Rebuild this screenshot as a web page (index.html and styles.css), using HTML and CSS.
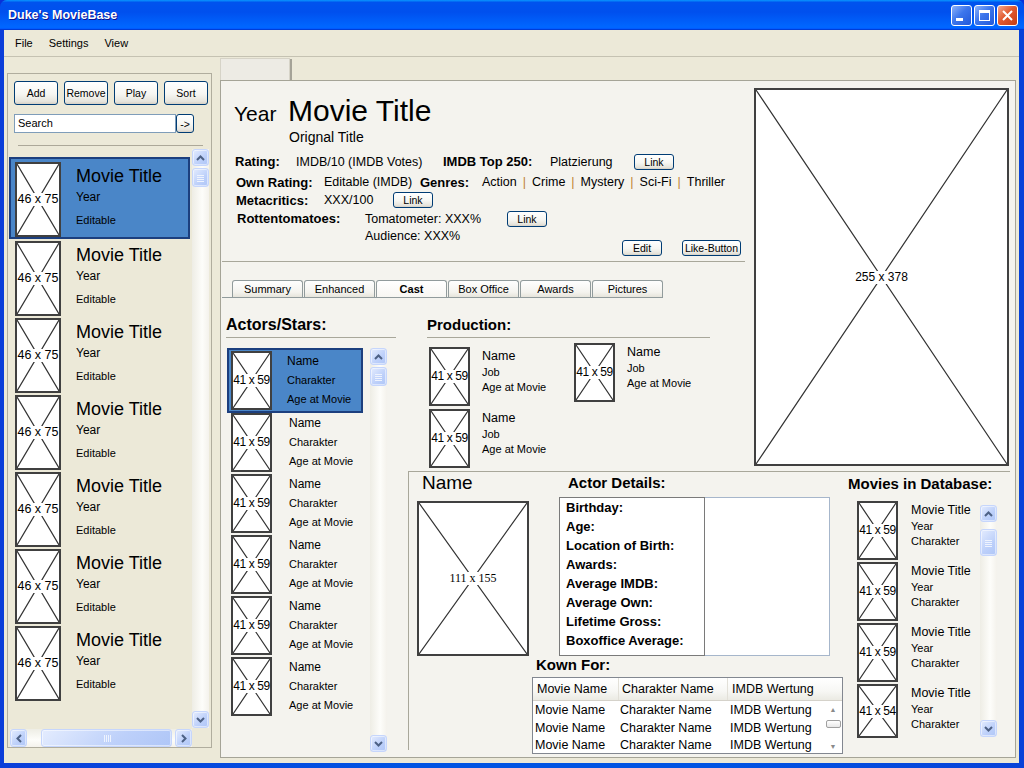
FILE: index.html
```html
<!DOCTYPE html>
<html>
<head>
<meta charset="utf-8">
<title>Duke's MovieBase</title>
<link rel="stylesheet" href="styles.css">
</head>
<body>
<div class="window">
  <div class="titlebar">
    <span class="title">Duke's MovieBase</span>
    <div class="tb-btns">
      <span class="tb-btn tb-blue"><span class="min-bar"></span></span>
      <span class="tb-btn tb-blue"><span class="max-box"></span></span>
      <span class="tb-btn tb-close"><svg width="19" height="19" viewBox="0 0 19 19"><path d="M5 5L14 14M14 5L5 14"/></svg></span>
    </div>
  </div>
  <div class="client">
    <div class="menubar"><span>File</span><span>Settings</span><span>View</span></div>
    <div class="body">
      <aside class="left-panel">
        <div class="lp-toolbar">
          <span class="xbtn lp-btn">Add</span>
          <span class="xbtn lp-btn">Remove</span>
          <span class="xbtn lp-btn">Play</span>
          <span class="xbtn lp-btn">Sort</span>
        </div>
        <div class="lp-search">
          <span class="search-input">Search</span>
          <span class="xbtn go-btn">-&gt;</span>
        </div>
        <div class="lp-sep"></div>
        <div class="lp-list">
          <div class="lp-items">
            <div class="movie-item selected">
              <div class="ph ph-46"><svg viewBox="0 0 100 100" preserveAspectRatio="none"><path d="M0 0L100 100M100 0L0 100"/></svg><span>46 x 75</span></div>
              <div class="mi-text"><div class="mi-title">Movie Title</div><div class="mi-year">Year</div><div class="mi-edit">Editable</div></div>
            </div>
            <div class="movie-item">
              <div class="ph ph-46"><svg viewBox="0 0 100 100" preserveAspectRatio="none"><path d="M0 0L100 100M100 0L0 100"/></svg><span>46 x 75</span></div>
              <div class="mi-text"><div class="mi-title">Movie Title</div><div class="mi-year">Year</div><div class="mi-edit">Editable</div></div>
            </div>
            <div class="movie-item">
              <div class="ph ph-46"><svg viewBox="0 0 100 100" preserveAspectRatio="none"><path d="M0 0L100 100M100 0L0 100"/></svg><span>46 x 75</span></div>
              <div class="mi-text"><div class="mi-title">Movie Title</div><div class="mi-year">Year</div><div class="mi-edit">Editable</div></div>
            </div>
            <div class="movie-item">
              <div class="ph ph-46"><svg viewBox="0 0 100 100" preserveAspectRatio="none"><path d="M0 0L100 100M100 0L0 100"/></svg><span>46 x 75</span></div>
              <div class="mi-text"><div class="mi-title">Movie Title</div><div class="mi-year">Year</div><div class="mi-edit">Editable</div></div>
            </div>
            <div class="movie-item">
              <div class="ph ph-46"><svg viewBox="0 0 100 100" preserveAspectRatio="none"><path d="M0 0L100 100M100 0L0 100"/></svg><span>46 x 75</span></div>
              <div class="mi-text"><div class="mi-title">Movie Title</div><div class="mi-year">Year</div><div class="mi-edit">Editable</div></div>
            </div>
            <div class="movie-item">
              <div class="ph ph-46"><svg viewBox="0 0 100 100" preserveAspectRatio="none"><path d="M0 0L100 100M100 0L0 100"/></svg><span>46 x 75</span></div>
              <div class="mi-text"><div class="mi-title">Movie Title</div><div class="mi-year">Year</div><div class="mi-edit">Editable</div></div>
            </div>
            <div class="movie-item">
              <div class="ph ph-46"><svg viewBox="0 0 100 100" preserveAspectRatio="none"><path d="M0 0L100 100M100 0L0 100"/></svg><span>46 x 75</span></div>
              <div class="mi-text"><div class="mi-title">Movie Title</div><div class="mi-year">Year</div><div class="mi-edit">Editable</div></div>
            </div>
          </div>
          <div class="vscroll lp-vscroll">
            <span class="sb-btn"><svg width="9" height="6" viewBox="0 0 9 6"><path d="M1 5L4.5 1.5L8 5"/></svg></span>
            <span class="sb-btn sb-thumb"><svg width="7" height="8" viewBox="0 0 7 8"><path d="M0 1.5H7M0 3.5H7M0 5.5H7M0 7.5H7"/></svg></span>
            <span class="sb-space"></span>
            <span class="sb-btn"><svg width="9" height="6" viewBox="0 0 9 6"><path d="M1 1L4.5 4.5L8 1"/></svg></span>
          </div>
        </div>
        <div class="hscroll">
          <span class="sb-btn"><svg width="6" height="9" viewBox="0 0 6 9"><path d="M5 1L1.5 4.5L5 8"/></svg></span>
          <span class="sb-btn h-thumb"><svg width="8" height="7" viewBox="0 0 8 7"><path d="M1.5 0V7M3.5 0V7M5.5 0V7M7.5 0V7"/></svg></span>
          <span class="sb-btn h-right"><svg width="6" height="9" viewBox="0 0 6 9"><path d="M1 1L4.5 4.5L1 8"/></svg></span>
        </div>
      </aside>

      <section class="main-wrap">
        <div class="main-tab"></div>
        <div class="main">
          <div class="header">
            <div class="hd-title"><span class="hd-year">Year</span><span class="hd-movie">Movie Title</span></div>
            <div class="hd-orig">Orignal Title</div>
            <div class="hd-row r1">
              <span class="lbl w-rating">Rating:</span>
              <span class="w-imdb">IMDB/10 (IMDB Votes)</span>
              <span class="lbl w-top">IMDB Top 250:</span>
              <span class="w-platz">Platzierung</span>
              <span class="xbtn link-btn">Link</span>
            </div>
            <div class="hd-row r2">
              <span class="lbl w-own">Own Rating:</span>
              <span class="w-edit">Editable (IMDB)</span>
              <span class="lbl w-genres">Genres:</span>
              <span class="genres">Action<i>|</i>Crime<i>|</i>Mystery<i>|</i>Sci-Fi<i>|</i>Thriller</span>
            </div>
            <div class="hd-row r3">
              <span class="lbl w-own">Metacritics:</span>
              <span class="w-meta">XXX/100</span>
              <span class="xbtn link-btn">Link</span>
            </div>
            <div class="hd-row r4">
              <span class="lbl rt-label">Rottentomatoes:</span>
              <div class="rt-vals">
                <div class="rt-tomato">Tomatometer: XXX%</div>
                <div class="rt-aud">Audience: XXX%</div>
              </div>
              <span class="xbtn link-btn rt-link">Link</span>
              <div class="hd-actions">
                <span class="xbtn edit-btn">Edit</span>
                <span class="xbtn like-btn">Like-Button</span>
              </div>
            </div>
            <div class="hd-sep"></div>
          </div>

          <div class="tabs-area">
            <div class="tabbar">
              <span class="tab">Summary</span>
              <span class="tab">Enhanced</span>
              <span class="tab active">Cast</span>
              <span class="tab">Box Office</span>
              <span class="tab">Awards</span>
              <span class="tab">Pictures</span>
            </div>
          </div>

          <div class="poster-cell">
            <div class="ph ph-poster"><svg viewBox="0 0 100 100" preserveAspectRatio="none"><path d="M0 0L100 100M100 0L0 100"/></svg><span>255 x 378</span></div>
          </div>

          <div class="actors">
            <div class="sec-head actors-head">Actors/Stars:</div>
            <div class="actor-list">
              <div class="actor-items">
                <div class="actor-item selected">
                  <div class="ph ph-41"><svg viewBox="0 0 100 100" preserveAspectRatio="none"><path d="M0 0L100 100M100 0L0 100"/></svg><span>41 x 59</span></div>
                  <div class="ai-text"><div class="t-name">Name</div><div class="t-sub">Charakter</div><div class="t-sub">Age at Movie</div></div>
                </div>
                <div class="actor-item">
                  <div class="ph ph-41"><svg viewBox="0 0 100 100" preserveAspectRatio="none"><path d="M0 0L100 100M100 0L0 100"/></svg><span>41 x 59</span></div>
                  <div class="ai-text"><div class="t-name">Name</div><div class="t-sub">Charakter</div><div class="t-sub">Age at Movie</div></div>
                </div>
                <div class="actor-item">
                  <div class="ph ph-41"><svg viewBox="0 0 100 100" preserveAspectRatio="none"><path d="M0 0L100 100M100 0L0 100"/></svg><span>41 x 59</span></div>
                  <div class="ai-text"><div class="t-name">Name</div><div class="t-sub">Charakter</div><div class="t-sub">Age at Movie</div></div>
                </div>
                <div class="actor-item">
                  <div class="ph ph-41"><svg viewBox="0 0 100 100" preserveAspectRatio="none"><path d="M0 0L100 100M100 0L0 100"/></svg><span>41 x 59</span></div>
                  <div class="ai-text"><div class="t-name">Name</div><div class="t-sub">Charakter</div><div class="t-sub">Age at Movie</div></div>
                </div>
                <div class="actor-item">
                  <div class="ph ph-41"><svg viewBox="0 0 100 100" preserveAspectRatio="none"><path d="M0 0L100 100M100 0L0 100"/></svg><span>41 x 59</span></div>
                  <div class="ai-text"><div class="t-name">Name</div><div class="t-sub">Charakter</div><div class="t-sub">Age at Movie</div></div>
                </div>
                <div class="actor-item">
                  <div class="ph ph-41"><svg viewBox="0 0 100 100" preserveAspectRatio="none"><path d="M0 0L100 100M100 0L0 100"/></svg><span>41 x 59</span></div>
                  <div class="ai-text"><div class="t-name">Name</div><div class="t-sub">Charakter</div><div class="t-sub">Age at Movie</div></div>
                </div>
              </div>
              <div class="vscroll actor-vscroll">
                <span class="sb-btn"><svg width="9" height="6" viewBox="0 0 9 6"><path d="M1 5L4.5 1.5L8 5"/></svg></span>
                <span class="sb-btn sb-thumb"><svg width="7" height="8" viewBox="0 0 7 8"><path d="M0 1.5H7M0 3.5H7M0 5.5H7M0 7.5H7"/></svg></span>
                <span class="sb-space"></span>
                <span class="sb-btn"><svg width="9" height="6" viewBox="0 0 9 6"><path d="M1 1L4.5 4.5L8 1"/></svg></span>
              </div>
            </div>
          </div>

          <div class="production">
            <div class="sec-head prod-head">Production:</div>
            <div class="prod-grid">
              <div class="prod-col1">
                <div class="prod-item">
                  <div class="ph ph-41"><svg viewBox="0 0 100 100" preserveAspectRatio="none"><path d="M0 0L100 100M100 0L0 100"/></svg><span>41 x 59</span></div>
                  <div class="pi-text"><div class="p-name">Name</div><div class="p-sub">Job</div><div class="p-sub">Age at Movie</div></div>
                </div>
                <div class="prod-item">
                  <div class="ph ph-41"><svg viewBox="0 0 100 100" preserveAspectRatio="none"><path d="M0 0L100 100M100 0L0 100"/></svg><span>41 x 59</span></div>
                  <div class="pi-text"><div class="p-name">Name</div><div class="p-sub">Job</div><div class="p-sub">Age at Movie</div></div>
                </div>
              </div>
              <div class="prod-col2">
                <div class="prod-item">
                  <div class="ph ph-41"><svg viewBox="0 0 100 100" preserveAspectRatio="none"><path d="M0 0L100 100M100 0L0 100"/></svg><span>41 x 59</span></div>
                  <div class="pi-text"><div class="p-name">Name</div><div class="p-sub">Job</div><div class="p-sub">Age at Movie</div></div>
                </div>
              </div>
            </div>
          </div>

          <div class="details">
            <div class="d-col1">
              <div class="d-name">Name</div>
              <div class="ph ph-111"><svg viewBox="0 0 100 100" preserveAspectRatio="none"><path d="M0 0L100 100M100 0L0 100"/></svg><span>111 x 155</span></div>
            </div>
            <div class="d-col2">
              <div class="plain-head ad-head">Actor Details:</div>
              <div class="ad-box">
                <div class="ad-labels">
                  <div>Birthday:</div>
                  <div>Age:</div>
                  <div>Location of Birth:</div>
                  <div>Awards:</div>
                  <div>Average IMDB:</div>
                  <div>Average Own:</div>
                  <div>Lifetime Gross:</div>
                  <div>Boxoffice Average:</div>
                </div>
                <div class="ad-values"></div>
              </div>
              <div class="plain-head kf-head">Kown For:</div>
              <div class="kf-table">
                <div class="kf-header">
                  <span class="kc1">Movie Name</span><span class="kc2">Charakter Name</span><span class="kc3">IMDB Wertung</span>
                </div>
                <div class="kf-body">
                  <div class="kf-rows">
                    <div class="kf-row"><span class="kr1">Movie Name</span><span class="kr2">Charakter Name</span><span>IMDB Wertung</span></div>
                    <div class="kf-row"><span class="kr1">Movie Name</span><span class="kr2">Charakter Name</span><span>IMDB Wertung</span></div>
                    <div class="kf-row"><span class="kr1">Movie Name</span><span class="kr2">Charakter Name</span><span>IMDB Wertung</span></div>
                  </div>
                  <div class="kf-scroll">
                    <span class="kf-arrow">▲</span>
                    <span class="kf-thumb"></span>
                    <span class="kf-space"></span>
                    <span class="kf-arrow">▼</span>
                  </div>
                </div>
              </div>
            </div>
            <div class="d-col3">
              <div class="plain-head">Movies in Database:</div>
              <div class="mdb-list">
                <div class="mdb-items">
                  <div class="mdb-item">
                    <div class="ph ph-41"><svg viewBox="0 0 100 100" preserveAspectRatio="none"><path d="M0 0L100 100M100 0L0 100"/></svg><span>41 x 59</span></div>
                    <div class="mdb-text"><div class="p-name">Movie Title</div><div class="p-sub">Year</div><div class="p-sub">Charakter</div></div>
                  </div>
                  <div class="mdb-item">
                    <div class="ph ph-41"><svg viewBox="0 0 100 100" preserveAspectRatio="none"><path d="M0 0L100 100M100 0L0 100"/></svg><span>41 x 59</span></div>
                    <div class="mdb-text"><div class="p-name">Movie Title</div><div class="p-sub">Year</div><div class="p-sub">Charakter</div></div>
                  </div>
                  <div class="mdb-item">
                    <div class="ph ph-41"><svg viewBox="0 0 100 100" preserveAspectRatio="none"><path d="M0 0L100 100M100 0L0 100"/></svg><span>41 x 59</span></div>
                    <div class="mdb-text"><div class="p-name">Movie Title</div><div class="p-sub">Year</div><div class="p-sub">Charakter</div></div>
                  </div>
                  <div class="mdb-item">
                    <div class="ph ph-41s"><svg viewBox="0 0 100 100" preserveAspectRatio="none"><path d="M0 0L100 100M100 0L0 100"/></svg><span>41 x 54</span></div>
                    <div class="mdb-text"><div class="p-name">Movie Title</div><div class="p-sub">Year</div><div class="p-sub">Charakter</div></div>
                  </div>
                </div>
                <div class="vscroll mdb-vscroll">
                  <span class="sb-btn"><svg width="9" height="6" viewBox="0 0 9 6"><path d="M1 5L4.5 1.5L8 5"/></svg></span>
                  <span class="sb-btn sb-thumb mdb-thumb"><svg width="7" height="8" viewBox="0 0 7 8"><path d="M0 1.5H7M0 3.5H7M0 5.5H7M0 7.5H7"/></svg></span>
                  <span class="sb-space"></span>
                  <span class="sb-btn"><svg width="9" height="6" viewBox="0 0 9 6"><path d="M1 1L4.5 4.5L8 1"/></svg></span>
                </div>
              </div>
            </div>
          </div>
        </div>
      </section>
    </div>
  </div>
</div>
</body>
</html>
```

FILE: styles.css
```css
* { box-sizing: border-box; }
html, body { margin: 0; padding: 0; }
body {
  width: 1024px;
  height: 768px;
  overflow: hidden;
  background: #0831D9;
  font-family: "Liberation Sans", Arial, sans-serif;
  color: #000;
}
.window {
  width: 1024px;
  height: 768px;
  display: flex;
  flex-direction: column;
  background: linear-gradient(90deg, #0B3ED9, #0054E3 40%, #0054E3 70%, #0842D8);
  border-radius: 7px 7px 0 0;
}
.titlebar {
  height: 30px;
  display: flex;
  align-items: center;
  padding: 0 6px 0 8px;
  border-radius: 7px 7px 0 0;
  background: linear-gradient(180deg, #0997ff, #0053ee 8%, #0050ee 40%, #06f 88%, #06f 93%, #005bff 95%, #003dd7 96%, #003dd7);
}
.title {
  flex: 1;
  color: #fff;
  font-weight: bold;
  font-size: 12.5px;
  text-shadow: 1px 1px #0F1089;
}
.tb-btns { display: flex; gap: 2px; }
.tb-btn {
  width: 21px;
  height: 21px;
  border: 1px solid #fff;
  border-radius: 3px;
  display: grid;
  place-items: center;
}
.tb-blue { background: linear-gradient(135deg, #8DB2FA 0%, #3D76EC 45%, #2258DA 100%); }
.tb-close { background: linear-gradient(135deg, #F3A98F 0%, #E25A30 45%, #C43C14 100%); }
.tb-close svg path { stroke: #fff; stroke-width: 2; fill: none; }
.min-bar { width: 7px; height: 3px; background: #fff; margin: 8px 5px 0 0; }
.max-box { width: 11px; height: 11px; border: 1px solid #fff; border-top-width: 3px; }

.client {
  flex: 1;
  margin: 0 5px 5px 4px;
  background: #ECE9D8;
  display: flex;
  flex-direction: column;
}
.menubar {
  height: 27px;
  display: flex;
  align-items: center;
  padding-left: 11px;
  gap: 16px;
  font-size: 11px;
  border-bottom: 1px solid #C5C2B2;
}
.body { flex: 1; display: flex; }

/* left panel */
.left-panel {
  width: 205px;
  height: 675px;
  margin: 16px 0 0 3px;
  border: 1px solid #B0AD9E;
  background: #ECE9D8;
  display: flex;
  flex-direction: column;
}
.xbtn {
  display: inline-flex;
  align-items: center;
  justify-content: center;
  border: 1px solid #003C74;
  border-radius: 3px;
  background: linear-gradient(180deg, #FFFFFF 0%, #F6F6F2 55%, #E6E4DC 88%, #D6D0C5 100%);
  font-size: 10.5px;
  color: #000;
}
.lp-toolbar { display: flex; gap: 6px; padding: 7px 0 0 6px; }
.lp-btn { width: 44px; height: 24px; }
.lp-search { display: flex; margin: 9px 0 0 6px; height: 19px; }
.search-input {
  width: 162px;
  height: 19px;
  border: 1px solid #7F9DB9;
  background: #fff;
  font-size: 11px;
  line-height: 17px;
  padding-left: 3px;
}
.go-btn { width: 18px; height: 19px; }
.lp-sep { margin: 12px 0 0 10px; width: 185px; height: 1px; background: #ACA899; }
.lp-list { display: flex; margin: 4px 0 0 1px; height: 578px; }
.lp-items { width: 183px; padding-top: 7px; overflow: hidden; }
.movie-item {
  display: flex;
  width: 181px;
  height: 77px;
  border: 2px solid transparent;
  padding: 0 0 0 4px;
}
.movie-item.selected {
  height: 82px;
  padding-top: 3px;
  border-color: #1C3F7E;
  background: #4A86C8;
}
.mi-text { margin: 3px 0 0 15px; white-space: nowrap; }
.mi-title { font-size: 18px; line-height: 22px; }
.mi-year { font-size: 12px; line-height: 20px; }
.mi-edit { font-size: 11px; line-height: 20px; margin-top: 3px; }

/* placeholders */
.ph {
  display: grid;
  place-items: center;
  background: #fff;
  border: 2px solid #404040;
  flex: none;
}
.ph > * { grid-area: 1 / 1; }
.ph svg { width: 100%; height: 100%; }
.ph svg path { stroke: #333; stroke-width: 1.2; fill: none; vector-effect: non-scaling-stroke; }
.ph span {
  font-size: 12.5px;
  line-height: 13px;
  white-space: nowrap;
  background: #fff;
}
.ph-46 { width: 46px; height: 75px; }
.ph-41 { width: 41px; height: 59px; }
.ph-41s { width: 41px; height: 54px; }
.ph-41 span, .ph-41s span { font-size: 12px; letter-spacing: -0.4px; }
.ph-111 { width: 112px; height: 155px; }
.ph-111 span { font-size: 12px; font-family: "Liberation Serif", serif; padding: 0 1px; }
.ph-poster { width: 255px; height: 378px; }
.ph-poster span { font-size: 12px; padding: 0 2px; }

/* scrollbars */
.vscroll {
  width: 17px;
  display: flex;
  flex-direction: column;
  background: linear-gradient(90deg, #EEEDE5, #FDFDFA 60%, #F4F2EC);
}
.sb-btn {
  width: 17px;
  height: 17px;
  flex: none;
  border: 1px solid #C6D6FC;
  border-radius: 3px;
  background: linear-gradient(135deg, #E4ECFE, #BDD0FA 60%, #AFC6F7);
  box-shadow: inset 0 0 0 1px rgba(255,255,255,0.5);
  display: grid;
  place-items: center;
}
.sb-btn svg path { stroke: #4D6185; stroke-width: 2; fill: none; }
.sb-thumb { margin-top: 2px; height: 19px; }
.sb-thumb svg path, .h-thumb svg path { stroke: #EEF3FE; stroke-width: 1; }
.sb-space { flex: 1; }
.lp-vscroll { margin-top: -1px; }
.hscroll {
  display: flex;
  height: 18px;
  margin: 1px 0 0 2px;
  width: 182px;
  background: linear-gradient(180deg, #EEEDE5, #FDFDFA 60%, #F4F2EC);
}
.hscroll .sb-btn { height: 18px; }
.h-thumb { width: 131px !important; margin-left: 14px; }
.h-right { margin-left: 3px; }

/* main */
.main-wrap { display: flex; flex-direction: column; margin: 1px 0 0 8px; }
.main-tab {
  width: 70px;
  height: 22px;
  background: #EDEBE4;
  border: 1px solid #D6D3C7;
  border-bottom: none;
  box-shadow: 2px 1px 0 #A5A397;
}
.main {
  width: 796px;
  height: 678px;
  border: 1px solid #A5A497;
  background: #F4F3EE;
  display: grid;
  grid-template-columns: 185px 342px 267px;
  grid-template-rows: 181px 38px 170px 287px;
}

.header {
  grid-column: 1 / 3;
  grid-row: 1;
  padding: 12px 7px 0 14px;
  display: flex;
  flex-direction: column;
}
.hd-title { display: flex; align-items: baseline; height: 36px; line-height: 36px; margin-left: -1px; }
.hd-year { font-size: 21px; width: 54px; }
.hd-movie { font-size: 30px; }
.hd-orig { font-size: 14px; line-height: 17px; margin-left: 54px; }
.hd-row { display: flex; align-items: center; font-size: 12.5px; }
.lbl { font-weight: bold; font-size: 13px; }
.r1 { height: 21px; margin-top: 5px; }
.r2 { height: 20px; }
.r3 { height: 16px; }
.r4 { height: 48px; align-items: flex-start; }
.w-rating { width: 61px; }
.w-imdb { width: 147px; }
.w-top { width: 107px; }
.w-platz { width: 84px; }
.w-own { width: 88px; margin-left: 1px; }
.w-edit { width: 96px; }
.w-genres { width: 62px; }
.w-meta { width: 69px; }
.genres i { font-style: normal; color: #C08232; margin: 0 6px; }
.link-btn { width: 40px; height: 16px; }
.rt-label { width: 128px; margin-left: 2px; line-height: 22px; }
.rt-vals { width: 142px; }
.rt-tomato { line-height: 22px; }
.rt-aud { line-height: 12px; }
.rt-link { margin-top: 3px; }
.hd-actions { margin-left: auto; align-self: flex-end; display: flex; gap: 20px; }
.edit-btn { width: 40px; height: 16px; }
.like-btn { width: 59px; height: 16px; }
.hd-sep { margin: 5px -4px 0 -13px; height: 1px; background: #A8A79A; }

.tabs-area { grid-column: 1 / 3; grid-row: 2; padding-top: 18px; }
.tabbar {
  display: flex;
  gap: 1px;
  margin-left: 1px;
  width: 441px;
  height: 18px;
  padding-left: 10px;
  border-bottom: 1px solid #919B9C;
}
.tab {
  width: 71px;
  height: 17px;
  border: 1px solid #919B9C;
  border-bottom: none;
  border-radius: 3px 3px 0 0;
  background: linear-gradient(180deg, #FEFEFE, #F4F3EE 70%, #E6E4DB);
  font-size: 11px;
  line-height: 16px;
  text-align: center;
}
.tab.active { font-weight: bold; background: linear-gradient(180deg, #FFFFFF, #F7F6F2); }

.poster-cell { grid-column: 3; grid-row: 1 / 4; padding: 7px 0 0 6px; }

.sec-head {
  font-weight: bold;
  font-size: 15px;
  line-height: 19px;
  padding-bottom: 3px;
  border-bottom: 1px solid #A8A79A;
}
.actors { grid-column: 1; grid-row: 3 / 5; padding: 15px 0 0 5px; }
.actors-head { font-size: 16px; width: 170px; }
.actor-list { display: flex; margin: 10px 0 0 1px; height: 404px; }
.actor-items { width: 136px; }
.actor-item { display: flex; height: 61px; padding-left: 4px; }
.actor-item.selected {
  height: 65px;
  border: 2px solid #1C3F7E;
  background: #4A86C8;
  padding: 1px 0 0 2px;
}
.ai-text { margin: 1px 0 0 17px; white-space: nowrap; }
.selected .ai-text { margin-left: 15px; }
.t-name { font-size: 12px; line-height: 19px; }
.t-sub { font-size: 11px; line-height: 19px; }
.actor-vscroll { margin-left: 7px; height: 404px; }

.production { grid-column: 2; grid-row: 3; padding: 15px 0 0 21px; }
.prod-head { width: 283px; }
.prod-grid { display: flex; }
.prod-col1 { width: 145px; margin: 9px 0 0 2px; display: flex; flex-direction: column; gap: 3px; }
.prod-col2 { margin-top: 5px; }
.prod-item { display: flex; }
.pi-text { margin: 1px 0 0 12px; white-space: nowrap; }
.p-name { font-size: 12.5px; line-height: 17px; }
.p-sub { font-size: 11px; line-height: 15px; }

.details {
  grid-column: 2 / 4;
  grid-row: 4;
  margin: 1px 0 0 2px;
  width: 602px;
  height: 279px;
  border-top: 1px solid #A8A79A;
  border-left: 1px solid #A8A79A;
  display: flex;
}
.d-col1 { width: 123px; }
.d-name { font-size: 19px; line-height: 22px; padding-left: 13px; }
.d-col1 .ph { margin: 7px 0 0 8px; }
.d-col2 { width: 313px; padding-top: 2px; }
.plain-head { font-weight: bold; font-size: 15px; line-height: 18px; white-space: nowrap; }
.ad-head { margin-left: 36px; }
.ad-box { display: flex; margin: 5px 0 0 27px; height: 159px; }
.ad-labels {
  width: 146px;
  border: 1px solid #7A7A7A;
  background: #fff;
  padding-left: 6px;
  font-weight: bold;
  font-size: 13px;
  line-height: 19px;
}
.ad-values { width: 125px; border: 1px solid #A6B6CB; border-left: none; background: #fff; }
.kf-head { margin-left: 4px; }
.kf-table {
  margin-top: 3px;
  width: 311px;
  height: 77px;
  border: 1px solid #828790;
  background: #fff;
  display: flex;
  flex-direction: column;
}
.kf-header {
  display: flex;
  height: 23px;
  flex: none;
  align-items: center;
  font-size: 12.5px;
  background: linear-gradient(180deg, #FFFFFF, #F7F7F4 60%, #EBEAE3);
  border-bottom: 1px solid #D5D2CA;
}
.kf-header span { height: 100%; display: flex; align-items: center; border-right: 1px solid #E2E0D8; }
.kc1 { width: 86px; padding-left: 4px; }
.kc2 { width: 109px; padding-left: 3px; }
.kc3 { flex: 1; padding-left: 4px; border-right: none !important; }
.kf-body { display: flex; flex: 1; overflow: hidden; }
.kf-rows { flex: 1; padding-top: 1px; font-size: 12.5px; line-height: 17.5px; white-space: nowrap; }
.kf-row { display: flex; padding-left: 2px; }
.kr1 { width: 85px; }
.kr2 { width: 110px; }
.kf-scroll { width: 16px; margin-right: 1px; display: flex; flex-direction: column; align-items: center; background: #fff; }
.kf-arrow { font-size: 7px; color: #8A8A8A; line-height: 12px; margin-top: 3px; }
.kf-thumb { width: 15px; height: 8px; margin-top: 4px; border: 1px solid #A0A0A0; border-radius: 2px; background: linear-gradient(#FFFFFF, #E8E8E8); }
.kf-space { flex: 1; }
.d-col3 { flex: 1; padding: 3px 0 0 3px; }
.mdb-list { display: flex; margin: 8px 0 0 9px; }
.mdb-items { width: 111px; }
.mdb-item { display: flex; height: 61px; }
.mdb-text { margin: 1px 0 0 13px; white-space: nowrap; }
.mdb-vscroll { margin: 4px 0 0 12px; height: 232px; }
.mdb-thumb { margin-top: 7px; height: 27px; }
```
